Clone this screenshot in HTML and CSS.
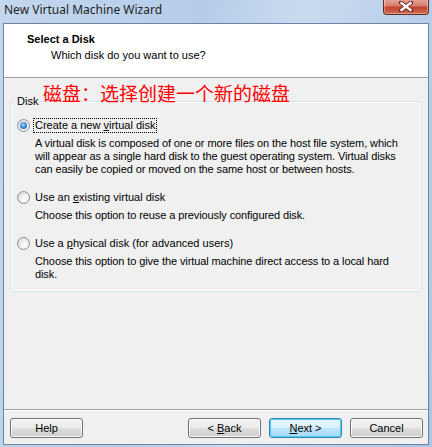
FILE: index.html
```html
<!DOCTYPE html>
<html lang="en">
<head>
    <meta charset="UTF-8">
    <title>New Virtual Machine Wizard</title>
    <link rel="stylesheet" href="styles.css">
</head>
<body>
    <div class="window">
        <div class="titlebar">
            <span class="title">New Virtual Machine Wizard</span>
            <div class="close">
                <svg width="14" height="11" viewBox="0 0 14 11">
                    <path d="M2 1.5 L12 9.5 M12 1.5 L2 9.5" stroke="#5a1e16" stroke-width="4" stroke-linecap="square"/>
                    <path d="M2.5 2 L11.5 9 M11.5 2 L2.5 9" stroke="#fff" stroke-width="2.4" stroke-linecap="square"/>
                </svg>
            </div>
        </div>
        <div class="client">
            <div class="header">
                <div class="h-title">Select a Disk</div>
                <div class="h-sub">Which disk do you want to use?</div>
            </div>
            <div class="body">
                <fieldset class="group">
                    <legend>Disk</legend>
                    <div class="option">
                        <div class="opt-row">
                            <span class="radio on"></span>
                            <span class="opt-label focus">Create a new <u>v</u>irtual disk</span>
                        </div>
                        <div class="opt-desc">A virtual disk is composed of one or more files on the host file system, which will appear as a single hard disk to the guest operating system. Virtual disks can easily be copied or moved on the same host or between hosts.</div>
                    </div>
                    <div class="option">
                        <div class="opt-row">
                            <span class="radio"></span>
                            <span class="opt-label">Use an <u>e</u>xisting virtual disk</span>
                        </div>
                        <div class="opt-desc">Choose this option to reuse a previously configured disk.</div>
                    </div>
                    <div class="option">
                        <div class="opt-row">
                            <span class="radio"></span>
                            <span class="opt-label">Use a <u>p</u>hysical disk (for advanced users)</span>
                        </div>
                        <div class="opt-desc">Choose this option to give the virtual machine direct access to a local hard disk.</div>
                    </div>
                </fieldset>
                <!-- annotation drawn over the dialog -->
                <span class="note">磁盘：选择创建一个新的磁盘</span>
            </div>
            <div class="footer">
                <button class="btn help">Help</button>
                <button class="btn">&lt; <u>B</u>ack</button>
                <button class="btn default"><u>N</u>ext &gt;</button>
                <button class="btn">Cancel</button>
            </div>
        </div>
    </div>
</body>
</html>
```

FILE: styles.css
```css
body {
    margin: 0;
    font-family: "Liberation Sans", Arial, sans-serif;
    font-size: 11px;
    color: #000;
}
.window {
    width: 432px;
    height: 447px;
    background: linear-gradient(100deg, #c3d7ee 0%, #b5cde9 40%, #c9dbef 60%, #aac6e6 100%);
    display: flex;
    flex-direction: column;
    overflow: hidden;
}
.titlebar {
    height: 23px;
    display: flex;
    justify-content: space-between;
    align-items: flex-start;
    flex: none;
}
.title {
    font-family: "Noto Sans", sans-serif;
    font-size: 12px;
    line-height: 20px;
    color: #1e1e1e;
    padding-left: 4px;
}
.close {
    width: 46px;
    height: 16px;
    margin-right: 3px;
    margin-top: -1px;
    box-sizing: border-box;
    border: 1px solid #5f2b22;
    border-top: none;
    border-radius: 0 0 4px 4px;
    background: linear-gradient(#e9a99c 0%, #d67c6b 45%, #c4442f 55%, #cf6a4e 100%);
    box-shadow: inset 0 0 0 1px rgba(255, 255, 255, 0.35);
    display: flex;
    justify-content: center;
    align-items: center;
}
.client {
    height: 422px;
    margin: 0 3px;
    box-sizing: border-box;
    border: 1px solid #6f84a0;
    background: #f0f0f0;
    display: flex;
    flex-direction: column;
    flex: none;
}
.header {
    height: 54px;
    box-sizing: border-box;
    background: #fff;
    border-bottom: 1px solid #a0a0a0;
    padding: 9px 0 0 23px;
    flex: none;
}
.h-title {
    font-weight: bold;
    line-height: 13px;
}
.h-sub {
    line-height: 13px;
    margin-top: 3px;
    padding-left: 24px;
}
.body {
    flex: 1;
    position: relative;
    padding: 17px 6px 0;
}
.note {
    position: absolute;
    left: 39px;
    top: 5px;
    font-family: "Noto Sans CJK SC", sans-serif;
    font-size: 19px;
    line-height: 19px;
    color: #ff0000;
}
.group {
    margin: 0;
    padding: 11px 6px 10px;
    border: 1px solid #d5dfe5;
    border-radius: 3px;
    box-shadow: inset 0 0 0 1px #fff;
}
.group legend {
    padding: 0 2px;
    margin-left: -2px;
    line-height: 13px;
    background: #f0f0f0;
}
.option + .option {
    margin-top: 15px;
}
.opt-row {
    display: flex;
    align-items: center;
    height: 13px;
}
.radio {
    width: 13px;
    height: 13px;
    flex: none;
    box-sizing: border-box;
    border-radius: 50%;
    border: 1px solid #8e8f8f;
    background: radial-gradient(circle at 65% 65%, #ffffff 0%, #f2f2f2 35%, #d4d4d4 100%);
    position: relative;
}
.radio.on::after {
    content: "";
    position: absolute;
    left: 2px;
    top: 2px;
    width: 7px;
    height: 7px;
    border-radius: 50%;
    background: radial-gradient(circle at 45% 40%, #a8dcff 0%, #3b8ee0 45%, #0f3e72 100%);
}
.opt-label {
    margin-left: 3px;
    padding: 0 1px;
    line-height: 13px;
    border: 1px dotted transparent;
}
.opt-label.focus {
    border-color: #000;
}
.opt-desc {
    margin: 5px 0 0 18px;
    line-height: 13px;
    padding-right: 8px;
    letter-spacing: -0.1px;
}
.footer {
    height: 35px;
    box-sizing: border-box;
    border-top: 1px solid #a0a0a0;
    box-shadow: inset 0 1px #fff;
    padding: 8px 5px 0 6px;
    display: flex;
    gap: 8px;
    flex: none;
}
.btn {
    width: 73px;
    height: 20px;
    box-sizing: border-box;
    border: 1px solid #707070;
    border-radius: 3px;
    background: linear-gradient(#f2f2f2 0%, #ebebeb 50%, #dddddd 50%, #cfcfcf 100%);
    box-shadow: inset 0 0 0 1px #fbfbfb;
    font-family: "Liberation Sans", Arial, sans-serif;
    font-size: 11px;
    color: #000;
    padding: 0;
}
.btn.help {
    margin-right: auto;
}
.btn.default {
    border-color: #3c7fb1;
    background: linear-gradient(#eaf6fd 0%, #d9f0fc 50%, #bee6fd 50%, #a7d9f5 100%);
    box-shadow: inset 0 0 0 1px #48d2ff;
}
```
